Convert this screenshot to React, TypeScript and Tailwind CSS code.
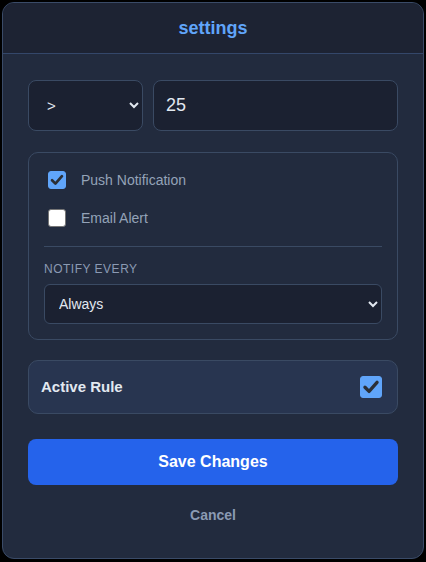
import React, { useState } from 'react';

const Check: React.FC<{ checked: boolean; onChange: () => void; size: string; className?: string }> = ({
  checked,
  onChange,
  size,
  className = '',
}) => (
  <span className={`relative inline-flex shrink-0 ${size} ${className}`}>
    <input
      type="checkbox"
      checked={checked}
      onChange={onChange}
      className="appearance-none w-full h-full rounded-[3px] border border-[#767676] bg-white checked:bg-[#60a5fa] checked:border-[#60a5fa]"
    />
    {checked && (
      <svg viewBox="0 0 16 16" className="pointer-events-none absolute inset-0 w-full h-full">
        <path d="M3.6 8.2 L6.6 11.2 L12.4 4.6" fill="none" stroke="#2b2f36" strokeWidth="2.4" strokeLinecap="round" strokeLinejoin="round" />
      </svg>
    )}
  </span>
);

const App: React.FC = () => {
  const [push, setPush] = useState(true);
  const [email, setEmail] = useState(false);
  const [active, setActive] = useState(true);

  return (
    <div className="w-[426px] h-[562px] bg-black p-[2px] font-['Liberation_Sans',Arial,sans-serif]">
      <div className="w-[422px] h-[557px] bg-[#222b3e] border border-[#3a4b68] rounded-[12px] overflow-hidden flex flex-col">
        <div className="h-[51px] bg-[#1d2333] border-b border-[#34476a] flex items-center justify-center">
          <h2 className="text-[18px] font-bold text-[#60a5fa]">settings</h2>
        </div>

        <div className="flex flex-col px-[25px] pt-[26px]">
          <div className="flex gap-[10px]">
            <select className="w-[115px] shrink-0 h-[51px] rounded-[8px] bg-[#1b2131] border border-[#3a4a63] text-[#e2e8f0] text-[15px] pl-[14px] pr-[4px] outline-none">
              <option>&gt;</option>
              <option>&lt;</option>
              <option>=</option>
            </select>
            <input
              defaultValue="25"
              className="flex-1 min-w-0 h-[51px] rounded-[8px] bg-[#1b2131] border border-[#3a4a63] text-[#e2e8f0] text-[18px] px-[12px] outline-none"
            />
          </div>

          <div className="mt-[21px] border border-[#3a4a63] rounded-[10px] px-[15px] pt-[15px] pb-[15px]">
            <label className="flex items-center h-[24px]">
              <Check checked={push} onChange={() => setPush(!push)} size="w-[18px] h-[18px]" className="ml-[4px]" />
              <span className="ml-[15px] text-[14px] text-[#94a3b8]">Push Notification</span>
            </label>
            <label className="flex items-center h-[24px] mt-[14px]">
              <Check checked={email} onChange={() => setEmail(!email)} size="w-[18px] h-[18px]" className="ml-[4px]" />
              <span className="ml-[15px] text-[14px] text-[#94a3b8]">Email Alert</span>
            </label>
            <div className="mt-[16px] border-t border-[#3a4a63]" />
            <div className="mt-[13px] text-[12px] tracking-[0.5px] uppercase text-[#8b9ab3]">Notify every</div>
            <select className="mt-[6px] w-full h-[40px] rounded-[6px] bg-[#1b2131] border border-[#3a4a63] text-[#e2e8f0] text-[14px] px-[10px] outline-none">
              <option>Always</option>
              <option>Once per hour</option>
              <option>Once per day</option>
            </select>
          </div>

          <div className="mt-[20px] h-[54px] bg-[#283550] border border-[#3a4a63] rounded-[10px] flex items-center justify-between pl-[12px] pr-[15px]">
            <span className="text-[15px] font-bold text-[#e2e8f0]">Active Rule</span>
            <Check checked={active} onChange={() => setActive(!active)} size="w-[22px] h-[22px]" />
          </div>

          <button className="mt-[25px] h-[46px] w-full rounded-[8px] bg-[#2563eb] text-white text-[16px] font-bold">
            Save Changes
          </button>

          <button className="mt-[20px] text-[14px] font-bold text-[#8b9ab3] self-center">Cancel</button>
        </div>
      </div>
    </div>
  );
};

export default App;
